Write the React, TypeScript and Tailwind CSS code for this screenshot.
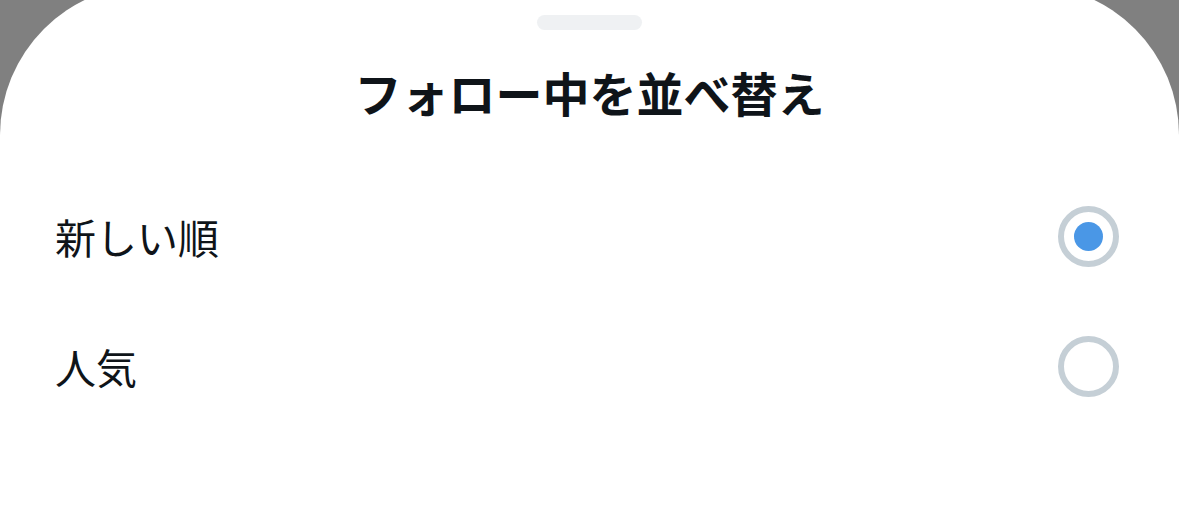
import React from "react";

const font = { fontFamily: '"Noto Sans CJK JP", "Noto Sans", sans-serif' };

function Radio({ checked }: { checked: boolean }) {
  return (
    <div className="w-[61px] h-[61px] rounded-full border-[6px] border-[#c5cfd6] flex items-center justify-center">
      {checked && <div className="w-[29px] h-[29px] rounded-full bg-[#4a97e6]" />}
    </div>
  );
}

export default function App() {
  const items = [
    { label: "新しい順", checked: true },
    { label: "人気", checked: false },
  ];
  return (
    <div className="w-full h-[525px] bg-[#808080] overflow-hidden" style={font}>
      <div className="-mt-[15px] h-[560px] bg-white rounded-t-[150px] flex flex-col pt-[30px]">
        <div className="flex justify-center">
          <div className="w-[105px] h-[15px] rounded-full bg-[#eff1f3]" />
        </div>
        <div className="mt-[31px] h-[60px] flex items-center justify-center text-[47px] font-bold text-[#0f1419] leading-none">
          フォロー中を並べ替え
        </div>
        <div className="mt-[50px] flex flex-col">
          {items.map((it) => (
            <div key={it.label} className="h-[130px] flex items-center justify-between pl-[55px] pr-[60px]">
              <span className="text-[41px] text-[#0f1419] leading-none">{it.label}</span>
              <Radio checked={it.checked} />
            </div>
          ))}
        </div>
      </div>
    </div>
  );
}
